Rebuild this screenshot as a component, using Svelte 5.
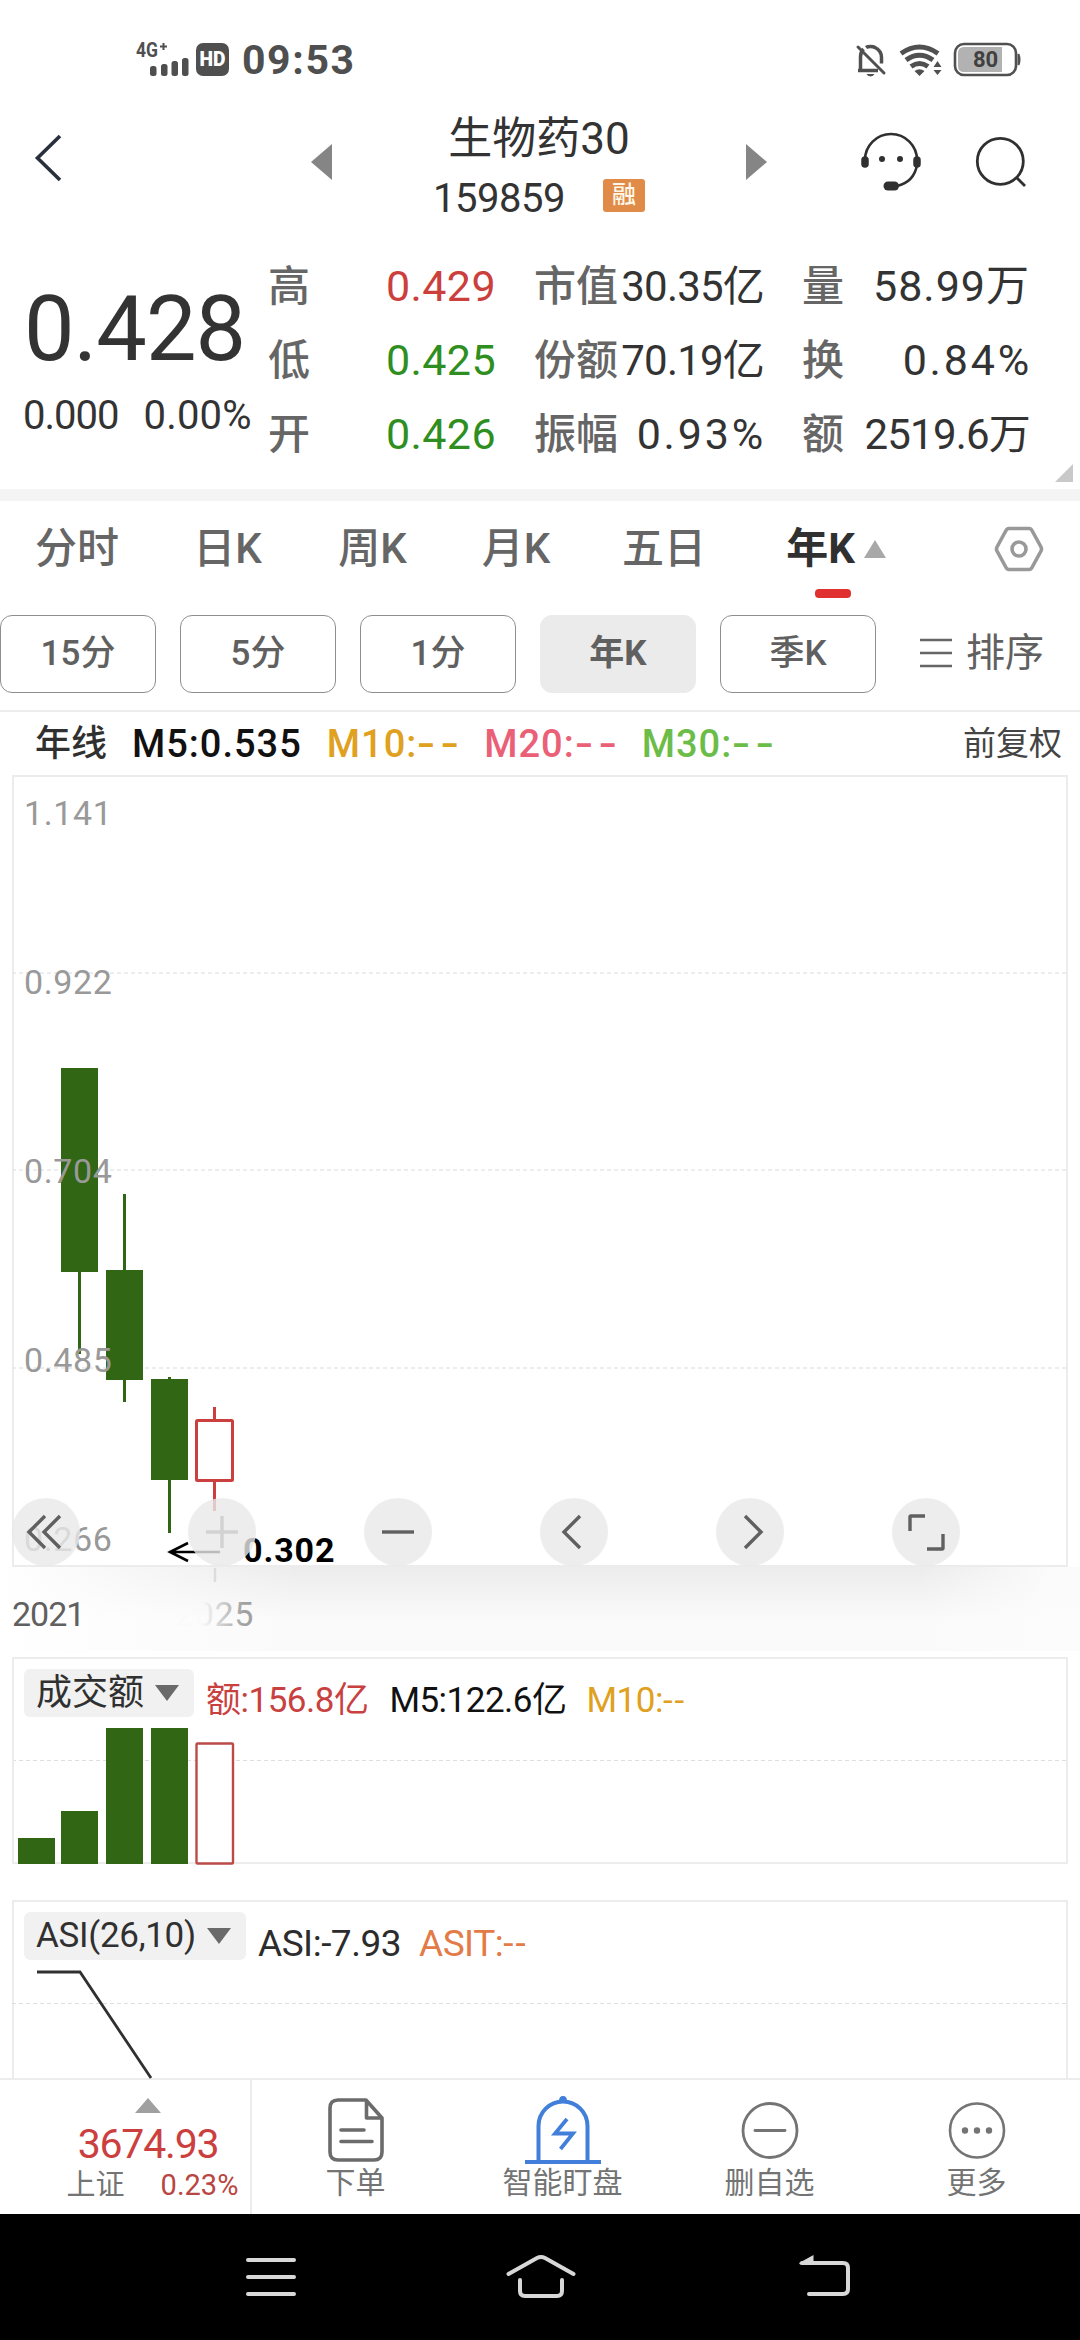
<script>
  const quote = [
    [
      { label: '高', value: '0.429', tone: 'up' },
      { label: '低', value: '0.425', tone: 'down' },
      { label: '开', value: '0.426', tone: 'down' },
    ],
    [
      { label: '市值', value: '30.35亿', tone: 'tight' },
      { label: '份额', value: '70.19亿', tone: 'tight' },
      { label: '振幅', value: '0.93%', tone: 'wide' },
    ],
    [
      { label: '量', value: '58.99万', tone: 'mid' },
      { label: '换', value: '0.84%', tone: 'wide' },
      { label: '额', value: '2519.6万', tone: 'tight' },
    ],
  ];

  const tabs = ['分时', '日K', '周K', '月K', '五日', '年K'];
  let activeTab = $state('年K');

  const periods = ['15分', '5分', '1分', '年K', '季K'];
  let activePeriod = $state('年K');

  const averages = [
    { name: 'M10', color: 'gold' },
    { name: 'M20', color: 'pink' },
    { name: 'M30', color: 'lime' },
  ];

  // y positions inside the 1056 x 792 price panel
  const gridLines = [198, 395, 593];
  const priceLabels = [
    { text: '1.141', y: 50 },
    { text: '0.922', y: 219 },
    { text: '0.704', y: 408 },
    { text: '0.485', y: 597 },
    { text: '0.266', y: 776 },
  ];
  const candles = [
    { x: 49, top: 293, bottom: 497, high: 293, low: 579 },
    { x: 94, top: 495, bottom: 605, high: 419, low: 627 },
    { x: 139, top: 604, bottom: 705, high: 602, low: 758 },
  ];

  const volumes = [
    { x: 6, h: 26 },
    { x: 49, h: 53 },
    { x: 94, h: 136 },
    { x: 139, h: 136 },
  ];
</script>

<div class="app">
  <!-- Status bar -->
  <div class="status">
    <div class="status-left">
      <svg width="94" height="40" viewBox="0 0 94 40">
        <text class="net" x="0" y="17" textLength="22" lengthAdjust="spacingAndGlyphs">4G</text>
        <path d="M24 6.500h7M27.500 3v7" stroke="#4f4f4f" stroke-width="2" />
        <g fill="#4f4f4f">
          <rect x="14" y="26" width="6.500" height="10" rx="2.500" />
          <rect x="25" y="24" width="6.500" height="12" rx="2.500" />
          <rect x="35.500" y="21" width="6.500" height="15" rx="2.500" />
          <rect x="46" y="18" width="6.500" height="18" rx="2.500" />
          <rect x="60" y="3" width="33" height="33" rx="7" />
        </g>
        <text class="hd" x="63.500" y="26" textLength="26" lengthAdjust="spacingAndGlyphs">HD</text>
      </svg>
      <span class="clock">09:53</span>
    </div>
    <svg width="166" height="36" viewBox="856 42 166 36" fill="none" stroke="#505050">
      <path d="M860.500 70V57c0-4 1-6 3-8M866 47.500c2-1.500 7-1.500 9 0 4 2 6.500 5 6.500 10v6M858 70.500h20" stroke-width="3.500" />
      <path d="M858 47l26 26" stroke-width="3" stroke-linecap="round" />
      <path d="M866.500 74h8a4.200 3.500 0 0 1-8 0z" fill="#505050" stroke="none" />
      <path d="M901 53.500q18.500-13 37 0M906 60q13.500-9.500 27 0M911 66.500q8.500-6 17 0" stroke-width="5" />
      <path d="M914.500 71q5-3.500 10 0l-5 5zM937.500 61l4 6h-8zM937.500 75l4-5h-8z" fill="#505050" stroke="none" />
      <rect x="955" y="44" width="61" height="31" rx="9" stroke-width="2.600" />
      <path d="M964 47h38v25h-38q-6 0-6-6V53q0-6 6-6z" fill="#b2b2b2" stroke="none" />
      <path d="M1018.500 54q2 5.500 0 11z" fill="#505050" stroke-width="2" />
      <text class="battery" x="985.500" y="66.500" text-anchor="middle">80</text>
    </svg>
  </div>

  <!-- Title -->
  <header class="header">
    <svg class="back" width="27" height="48" viewBox="0 0 27 48">
      <path d="M25 2L2.500 24 25 46" fill="none" stroke="#28303c" stroke-width="3.600" />
    </svg>
    <svg class="step" width="21" height="36" viewBox="0 0 21 36"><path d="M21 0v36L0 18z" fill="#858585" /></svg>
    <div class="title">
      <div class="name">生物药30</div>
      <div class="code">159859 <span class="badge">融</span></div>
    </div>
    <svg class="step" width="21" height="36" viewBox="0 0 21 36"><path d="M0 0v36l21-18z" fill="#858585" /></svg>
    <div class="tools">
      <svg width="62" height="60" viewBox="860 132 62 60" fill="none" stroke="#303030">
        <path d="M865 160a26 26 0 0 1 52 0v5q-3 17-20 21" stroke-width="2.600" />
        <path d="M865 160v4M917 160v4" stroke-width="7.500" stroke-linecap="round" />
        <path d="M888 186h6.500" stroke-width="9" stroke-linecap="round" />
        <circle cx="882" cy="159" r="3" fill="#303030" stroke="none" />
        <circle cx="900" cy="159" r="3" fill="#303030" stroke="none" />
      </svg>
      <svg width="52" height="52" viewBox="975 135 52 52" fill="none" stroke="#303030" stroke-width="2.800">
        <circle cx="1000.300" cy="160.300" r="23" />
        <path d="M1016.500 176.500l8.500 8.500" />
      </svg>
    </div>
  </header>

  <!-- Quote -->
  <section class="quote">
    <div class="last">
      <div class="price">0.428</div>
      <div class="change"><span>0.000</span><span class="pct">0.00%</span></div>
    </div>
    {#each quote as column}
      <div class="quote-col">
        {#each column as item}
          <div class="quote-row">
            <span class="quote-label">{item.label}</span>
            <span class="quote-value {item.tone}">{item.value}</span>
          </div>
        {/each}
      </div>
    {/each}
    <span class="corner"></span>
  </section>

  <!-- Period tabs -->
  <nav class="tabs">
    {#each tabs as tab}
      <button class="tab" class:active={tab === activeTab} onclick={() => (activeTab = tab)}>
        {tab}{#if tab === activeTab}<span class="caret-up"></span>{/if}
      </button>
    {/each}
    <svg class="gear" width="50" height="46" viewBox="0 0 50 46" fill="none" stroke="#999" stroke-width="3.600">
      <path d="M15 2.500h20q2 0 3 2L47 21q1 2 0 4L38 41.500q-1 2-3 2H15q-2 0-3-2L3 25q-1-2 0-4L12 4.500q1-2 3-2z" />
      <circle cx="25" cy="23" r="7" />
    </svg>
  </nav>

  <div class="periods">
    {#each periods as period}
      <button class="chip" class:selected={period === activePeriod} onclick={() => (activePeriod = period)}>{period}</button>
    {/each}
    <div class="sort">
      <svg width="32" height="30" viewBox="0 0 32 30"><path d="M0 2h32M0 15h32M0 28h32" stroke="#666" stroke-width="2.600" /></svg>
      <span>排序</span>
    </div>
  </div>

  <div class="legend">
    <span class="legend-name">年线</span>
    <span class="ma">M5:0.535</span>
    {#each averages as ma}
      <span class="ma {ma.color}">{ma.name}:<span class="dash">--</span></span>
    {/each}
    <span class="adjust">前复权</span>
  </div>

  <!-- Price chart -->
  <div class="panel price-panel">
    <svg width="1056" height="876" viewBox="0 0 1056 876">
      <defs>
        <linearGradient id="yearFade" gradientUnits="userSpaceOnUse" x1="190" x2="232" y1="0" y2="0">
          <stop offset="0" stop-color="#fafafa" />
          <stop offset="1" stop-color="#a0a0a0" />
        </linearGradient>
      </defs>
      <rect x="1" y="1" width="1054" height="790" fill="none" stroke="#ececec" stroke-width="2" />
      {#each gridLines as y}
        <path d="M0 {y}h1056" stroke="#e8e8e8" stroke-width="1.500" stroke-dasharray="4 3" />
      {/each}
      {#each candles as c}
        <path d="M{c.x + 18.5} {c.high}V{c.low}" stroke="#306614" stroke-width="3" />
        <rect x={c.x} y={c.top} width="37" height={c.bottom - c.top} fill="#306614" />
      {/each}
      <g fill="none" stroke="#cb403e" stroke-width="3">
        <path d="M202.500 632v13M202.500 707v29" />
        <rect x="184.500" y="645.500" width="36" height="60" rx="1" />
      </g>
      {#each priceLabels as label}
        <text class="axis" x="12" y={label.y}>{label.text}</text>
      {/each}
      <path d="M208 777h-51M176 768l-18 9 18 9" fill="none" stroke="#000" stroke-width="2.600" />
      <text class="low" x="231" y="787">0.302</text>
      <path d="M203 793v14" stroke="#dcdcdc" stroke-width="2.500" />
      <text class="year" x="0" y="851">2021</text>
      <text class="axis year-faded" x="163" y="851">2025</text>
    </svg>
    <div class="chart-tools">
      <button class="round"><svg viewBox="0 0 68 68"><path d="M33 18L17 34l16 16M48 18L32 34l16 16" /></svg></button>
      <button class="round off"><svg viewBox="0 0 68 68"><path d="M18 34h32M34 18v32" /></svg></button>
      <button class="round"><svg viewBox="0 0 68 68"><path d="M18 34h32" /></svg></button>
      <button class="round"><svg viewBox="0 0 68 68"><path d="M40 18L24 34l16 16" /></svg></button>
      <button class="round"><svg viewBox="0 0 68 68"><path d="M29 18l16 16-16 16" /></svg></button>
      <button class="round"><svg viewBox="0 0 68 68"><path d="M18 33V19q0-1 1-1h14M51 36v14q0 1-1 1H35" /></svg></button>
    </div>
  </div>

  <!-- Turnover -->
  <div class="panel volume-panel">
    <svg width="1056" height="209" viewBox="0 0 1056 209">
      <path d="M0 103.500h1056" stroke="#dedede" stroke-width="1.200" stroke-dasharray="4 3" />
      <path d="M0 206h1056M1 0v206M1055 0v206M0 1h1056" stroke="#ececec" stroke-width="2" />
      {#each volumes as v}
        <rect x={v.x} y={207 - v.h} width="37" height={v.h} fill="#306614" />
      {/each}
      <rect x="184.500" y="86.500" width="36.500" height="120" rx="1" fill="#fff" stroke="#bb4b49" stroke-width="2.400" />
    </svg>
    <div class="panel-head volume-head">
      <button class="picker">成交额<span class="caret-down"></span></button>
      <span class="red">额:156.8亿</span>
      <span class="black">M5:122.6亿</span>
      <span class="gold">M10:<span class="pair">--</span></span>
    </div>
  </div>

  <!-- ASI -->
  <div class="panel asi-panel">
    <svg width="1056" height="178" viewBox="0 0 1056 178">
      <path d="M0 1h1056M1 0v178M1055 0v178" stroke="#ececec" stroke-width="2" />
      <path d="M0 103.500h1056" stroke="#dedede" stroke-width="1.200" stroke-dasharray="4 3" />
      <path d="M25 72h43l71 106" fill="none" stroke="#303030" stroke-width="2.800" />
    </svg>
    <div class="panel-head">
      <button class="picker asi-picker">ASI(26,10)<span class="caret-down"></span></button>
      <span class="dark">ASI:-7.93</span>
      <span class="orange">ASIT:<span class="pair">--</span></span>
    </div>
  </div>

  <!-- Bottom bar -->
  <footer class="bottom">
    <div class="index">
      <span class="caret-up"></span>
      <div class="index-value">3674.93</div>
      <div class="index-line"><span>上证</span><span class="index-pct">0.23%</span></div>
    </div>
    <button class="action">
      <svg width="76" height="68" viewBox="-10 0 76 68" fill="none" stroke="#6b6b6b" stroke-width="3.600" stroke-linecap="round" stroke-linejoin="round">
        <path d="M10 4h28l16 18v34q0 8-8 8H10q-8 0-8-8V12q0-8 8-8zM38.500 5v17H54M13 34h23M13 45.500h31" />
      </svg>
      下单
    </button>
    <button class="action">
      <svg width="76" height="68" viewBox="0 0 76 68" fill="none" stroke="#427fdb" stroke-width="4">
        <path d="M13.500 64V30a24.500 24.500 0 0 1 49 0v34M0 66h76" />
        <path d="M34 5q0-5 4-5t4 5z" fill="#427fdb" stroke="none" />
        <path d="M42 23L30 37.500h18L35.500 53" stroke-width="3.800" />
      </svg>
      智能盯盘
    </button>
    <button class="action">
      <svg width="76" height="68" viewBox="0 0 76 68" fill="none" stroke="#747474" stroke-width="2.800">
        <circle cx="38" cy="34.500" r="27" />
        <path d="M23 34.500h30" stroke-linecap="round" />
      </svg>
      删自选
    </button>
    <button class="action">
      <svg width="76" height="68" viewBox="0 0 76 68" fill="none" stroke="#747474" stroke-width="2.600">
        <circle cx="38" cy="34.500" r="27" />
        <path d="M26 34.500h0M38 34.500h0M50 34.500h0" stroke-width="6.400" stroke-linecap="round" />
      </svg>
      更多
    </button>
  </footer>

  <!-- System navigation -->
  <div class="sysnav">
    <svg width="50" height="46" viewBox="0 0 50 46"><path d="M2 6h46M2 23h46M2 40h46" /></svg>
    <svg width="70" height="46" viewBox="0 0 70 46"><path d="M2.500 20L31 4q4-2 8 0l28.500 16M14 26v11q0 5 5 5h32q5 0 5-5V26" /></svg>
    <svg width="64" height="46" viewBox="-13 0 64 46">
      <path d="M3 9h41q5 0 5 5v21q0 5-5 5H10" />
      <polygon points="0,9 14.500,1 14.500,9.500 1,10.500" fill="#d8d8d8" />
    </svg>
  </div>
</div>

<style>
  :global(body) {
    background: #fff;
  }

  .app {
    width: 1080px;
    height: 2340px;
    overflow: hidden;
    display: flex;
    flex-direction: column;
    background: #fff;
    color: #333;
    font-family: Roboto, "Noto Sans CJK SC", sans-serif;
  }
  svg { display: block; flex: none; overflow: visible; }
  button {
    border: none;
    background: none;
    padding: 0;
    margin: 0;
    font: inherit;
    color: inherit;
  }

  .red { color: #c9413f; }
  .gold { color: #e0a020; }
  .pink { color: #ea6076; }
  .lime { color: #6cbd48; }
  .black { color: #111; }
  .dark { color: #2c2c2c; }
  .orange { color: #e27b48; }

  /* status bar */
  .status {
    height: 120px;
    padding: 0 58px 0 136px;
    display: flex;
    align-items: center;
    justify-content: space-between;
    box-sizing: border-box;
    flex: none;
  }
  .status-left { display: flex; align-items: center; gap: 12px; }
  .clock { font-size: 41px; font-weight: 700; letter-spacing: 1.6px; color: #4f4f4f; line-height: 40px; }
  .net { font-size: 20px; font-weight: 700; fill: #4f4f4f; }
  .hd { font-size: 20px; font-weight: 900; fill: #fff; }
  .battery { font-size: 22px; font-weight: 700; fill: #404040; stroke: none; }

  /* title */
  .header {
    height: 129px;
    flex: none;
    display: grid;
    grid-template-columns: 276px 21px 414px 21px 1fr;
    padding-left: 35px;
    box-sizing: border-box;
    align-items: start;
  }
  .back { margin-top: 14px; }
  .step { margin-top: 24px; }
  .title { text-align: center; margin-top: -11px; }
  .name { font-size: 44px; line-height: 60px; }
  .code {
    font-size: 40px;
    line-height: 60px;
    display: flex;
    justify-content: center;
    align-items: center;
    gap: 38px;
    letter-spacing: -0.5px;
  }
  .badge {
    width: 42px;
    height: 33px;
    margin-top: -7px;
    border-radius: 3px;
    background: #e08c48;
    color: #fff8e8;
    font-size: 24px;
    font-weight: 500;
    line-height: 32px;
    letter-spacing: 0;
  }
  .tools { display: flex; align-items: center; gap: 53px; margin-top: 12px; padding-left: 93px; }

  /* quote */
  .quote {
    position: relative;
    height: 252px;
    flex: none;
    box-sizing: border-box;
    border-bottom: 12px solid #f4f4f4;
    display: grid;
    grid-template-columns: 204px 228px 230px 228px;
    column-gap: 38px;
    padding-left: 26px;
  }
  .last { padding-top: 31px; white-space: nowrap; }
  .price { font-size: 90px; line-height: 100px; letter-spacing: -1px; margin-left: -2px; }
  .change { display: flex; gap: 25px; font-size: 40px; line-height: 72px; letter-spacing: -1px; margin-left: -3px; }
  .change .pct { letter-spacing: 0.2px; }
  .quote-row {
    height: 74px;
    display: flex;
    justify-content: space-between;
    line-height: 75px;
    white-space: nowrap;
  }
  .quote-label { font-size: 42px; font-weight: 500; color: #666; }
  .quote-value { font-size: 43px; }
  .quote-value.up { color: #cb3f3d; letter-spacing: 0.4px; }
  .quote-value.down { color: #2e8f20; letter-spacing: 0.4px; }
  .quote-value.tight { letter-spacing: -0.8px; font-size: 42px; }
  .quote-value.mid { letter-spacing: 1px; }
  .quote-value.wide { letter-spacing: 2.8px; margin-right: -2px; }
  .corner {
    position: absolute;
    right: 7px;
    bottom: 7px;
    border-left: 18px solid transparent;
    border-bottom: 18px solid #c9c9c9;
  }

  /* tabs */
  .tabs {
    height: 114px;
    flex: none;
    display: grid;
    grid-template-columns: 154px 147px 143px 144px 152px 192px 1fr;
    align-items: start;
  }
  .tab {
    position: relative;
    height: 96px;
    display: flex;
    align-items: center;
    justify-content: center;
    gap: 9px;
    font-size: 42px;
    font-weight: 500;
    line-height: 98px;
    color: #666;
  }
  .tab.active { color: #303030; font-weight: 700; }
  .tab.active::after {
    content: "";
    position: absolute;
    left: 75px;
    bottom: -1px;
    width: 36px;
    height: 9px;
    border-radius: 4px;
    background: #e03030;
  }
  .caret-up {
    border: 11px solid transparent;
    border-top: none;
    border-bottom: 18px solid #a8a8a8;
  }
  .gear { margin: 25px 0 0 62px; }

  .periods { display: flex; gap: 24px; height: 95px; flex: none; border-bottom: 2px solid #ececec; }
  .chip {
    width: 156px;
    height: 78px;
    box-sizing: border-box;
    border: 1.5px solid #8e8e8e;
    border-radius: 12px;
    font-size: 35px;
    font-weight: 500;
    line-height: 76px;
    color: #606060;
  }
  .chip.selected { background: #ebebeb; border-color: #ebebeb; font-weight: 700; }
  .sort {
    display: flex;
    align-items: center;
    gap: 14px;
    height: 76px;
    margin-left: 20px;
    font-size: 39px;
    line-height: 76px;
    color: #606060;
  }

  .legend {
    height: 63px;
    flex: none;
    display: flex;
    align-items: center;
    gap: 25px;
    padding: 0 18px 0 35px;
    color: #111;
    font-size: 38px;
    font-weight: 500;
    line-height: 64px;
    white-space: nowrap;
  }
  .legend-name { font-size: 36px; color: #303030; }
  .ma { letter-spacing: 1px; }
  .dash {
    display: inline-block;
    width: 42px;
    letter-spacing: 4px;
    transform: scaleX(1.4);
    transform-origin: left;
  }
  .adjust { margin-left: auto; font-size: 33px; font-weight: 400; line-height: 60px; color: #444; }

  /* charts */
  .panel { position: relative; margin: 0 12px; flex: none; }
  .price-panel { height: 882px; }
  .price-panel::before {
    content: "";
    position: absolute;
    left: -12px;
    right: -12px;
    top: 792px;
    height: 84px;
    background:
      linear-gradient(90deg, #fff 0, rgba(255, 255, 255, 0) 300px, rgba(255, 255, 255, 0) 920px, rgba(252, 252, 252, 0.9) 1050px),
      linear-gradient(#ececec 0, #f4f4f4 30px, #fafafa 52px);
  }
  .price-panel > svg { position: relative; }
  .axis { font-size: 34px; letter-spacing: 0.6px; fill: #999; }
  .low { font-size: 34px; font-weight: 700; letter-spacing: 0.9px; fill: #000; }
  .year { font-size: 34px; fill: #606060; letter-spacing: -1px; }
  .year-faded { fill: url(#yearFade); }

  .chart-tools {
    position: absolute;
    left: 0;
    top: 723px;
    display: flex;
    gap: 108px;
  }
  .round {
    width: 68px;
    height: 68px;
    border-radius: 50%;
    background: rgba(232, 232, 232, 0.8);
  }
  .round svg { width: 68px; height: 68px; fill: none; stroke: #606060; stroke-width: 3.400; }
  .round.off svg { stroke: #d2d2d2; }

  .volume-panel { height: 243px; }
  .asi-panel { height: 178px; }
  .panel-head {
    position: absolute;
    left: 12px;
    top: 12px;
    display: flex;
    align-items: flex-start;
    font-size: 37px;
    line-height: 64px;
    letter-spacing: -0.5px;
    white-space: nowrap;
  }
  .volume-head { font-size: 35px; letter-spacing: -0.5px; }
  .pair { letter-spacing: 2px; }
  .picker {
    display: flex;
    align-items: center;
    gap: 11px;
    height: 48px;
    width: 170px;
    padding-left: 12px;
    box-sizing: border-box;
    border-radius: 6px;
    background: #f1f1f1;
    color: #303030;
    font-size: 36px;
    line-height: 52px;
    letter-spacing: 0;
    margin-right: 12px;
  }
  .asi-picker { width: 222px; font-size: 35px; letter-spacing: -0.3px; }
  .caret-down {
    border: 12px solid transparent;
    border-bottom: none;
    border-top: 16px solid #6a6a6a;
  }
  .panel-head .red { margin-right: 21px; }
  .panel-head .black { margin-right: 20px; }
  .panel-head .dark { margin-right: 18px; }

  /* bottom bar */
  .bottom {
    height: 136px;
    flex: none;
    box-sizing: border-box;
    border-top: 2px solid #ececec;
    display: grid;
    grid-template-columns: 252px repeat(4, 207px);
  }
  .index {
    border-right: 2px solid #ececec;
    display: flex;
    flex-direction: column;
    align-items: center;
    padding: 18px 0 0 46px;
  }
  .index .caret-up { border-left-width: 13px; border-right-width: 13px; border-bottom: 15px solid #a0a0a0; }
  .index-value { font-size: 41px; line-height: 62px; color: #cb403e; letter-spacing: -1.2px; }
  .index-line { display: flex; gap: 36px; margin-left: 9px; font-size: 29px; line-height: 20px; color: #747474; }
  .index-pct { color: #b84643; }
  .action {
    display: flex;
    flex-direction: column;
    align-items: center;
    padding-top: 16px;
    font-size: 30px;
    line-height: 38px;
    color: #747474;
  }

  .sysnav {
    height: 126px;
    flex: none;
    background: #000;
    display: flex;
    align-items: center;
    gap: 210px;
    padding-left: 246px;
  }
  .sysnav path { fill: none; stroke: #d8d8d8; stroke-width: 4; stroke-linecap: round; }
</style>
